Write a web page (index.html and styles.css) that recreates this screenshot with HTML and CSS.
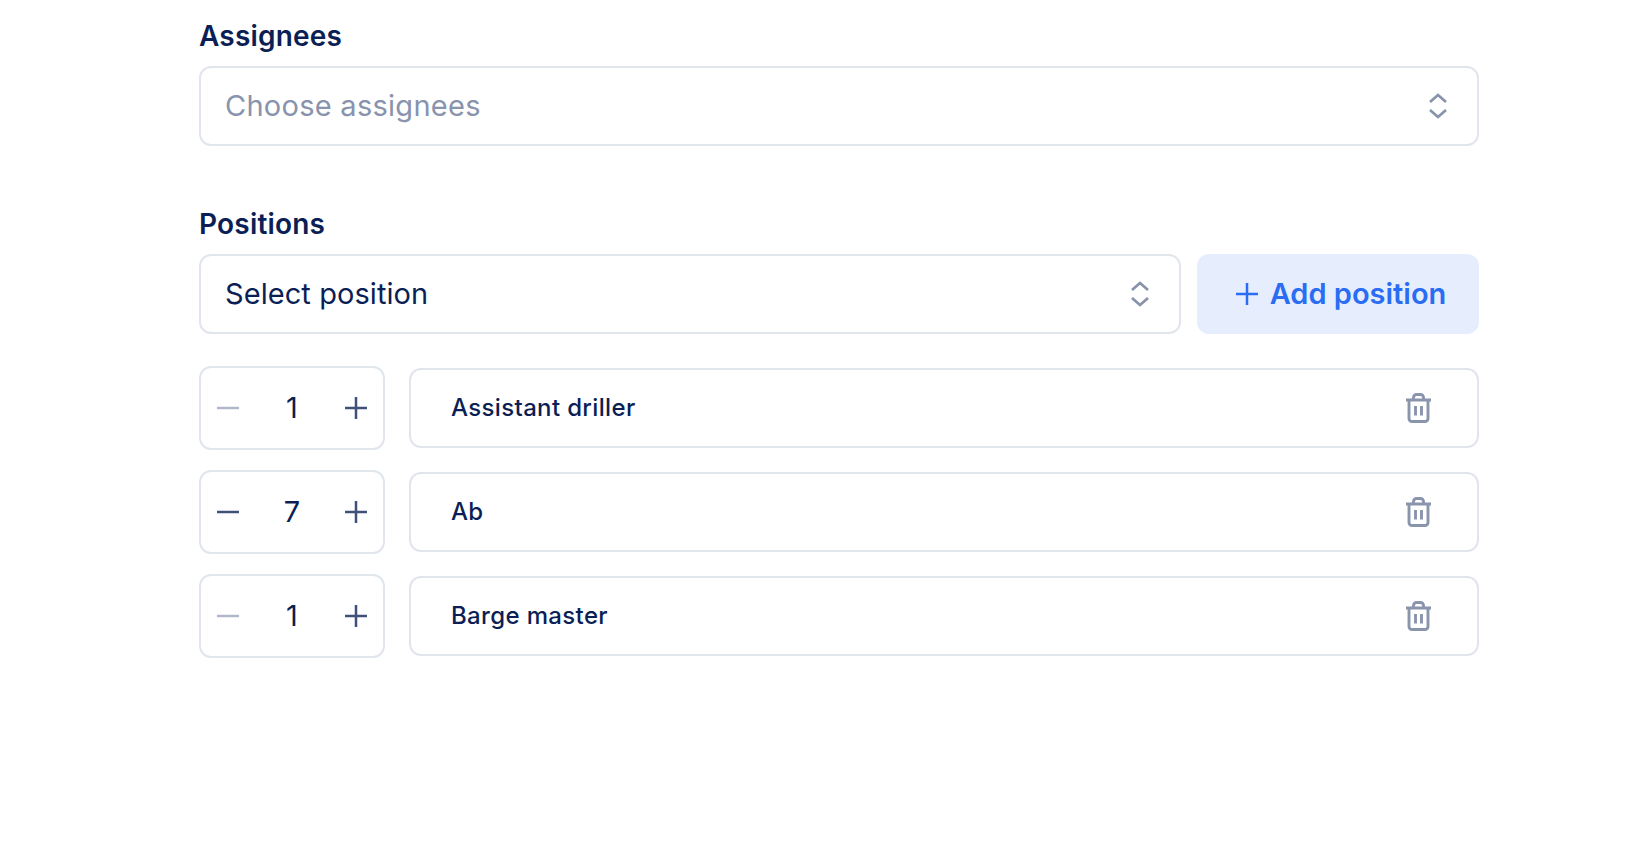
FILE: index.html
```html
<!DOCTYPE html>
<html lang="en">
<head>
<meta charset="utf-8">
<title>Positions</title>
<link rel="stylesheet" href="styles.css">
</head>
<body>
<main class="form">
  <section class="field">
    <label class="label">Assignees</label>
    <div class="select">
      <span class="placeholder">Choose assignees</span>
      <svg class="chev" viewBox="0 0 20 26"><path d="M2 9l8-7 8 7M2 17l8 7 8-7"/></svg>
    </div>
  </section>
  <section class="field">
    <label class="label">Positions</label>
    <div class="picker">
      <div class="select">
        <span class="value">Select position</span>
        <svg class="chev" viewBox="0 0 20 26"><path d="M2 9l8-7 8 7M2 17l8 7 8-7"/></svg>
      </div>
      <button class="add">
        <svg class="add-ic" viewBox="0 0 22 22"><path d="M11 0v22M0 11h22"/></svg>
        <span class="add-text">Add position</span>
      </button>
    </div>
    <div class="rows">
      <div class="row">
        <div class="stepper">
          <svg class="step off" viewBox="0 0 22 22"><path d="M0 11h22"/></svg>
          <span class="num">1</span>
          <svg class="step" viewBox="0 0 22 22"><path d="M11 0v22M0 11h22"/></svg>
        </div>
        <div class="item">
          <span class="name">Assistant driller</span>
          <svg class="trash" viewBox="0 0 27 30"><path d="M1 7h25M8.500 7V4.500a3 3 0 0 1 3-3h4a3 3 0 0 1 3 3V7M4 7v18.500a3 3 0 0 0 3 3h13a3 3 0 0 0 3-3V7M10.500 13v9.500M16.500 13v9.500"/></svg>
        </div>
      </div>
      <div class="row">
        <div class="stepper">
          <svg class="step" viewBox="0 0 22 22"><path d="M0 11h22"/></svg>
          <span class="num">7</span>
          <svg class="step" viewBox="0 0 22 22"><path d="M11 0v22M0 11h22"/></svg>
        </div>
        <div class="item">
          <span class="name">Ab</span>
          <svg class="trash" viewBox="0 0 27 30"><path d="M1 7h25M8.500 7V4.500a3 3 0 0 1 3-3h4a3 3 0 0 1 3 3V7M4 7v18.500a3 3 0 0 0 3 3h13a3 3 0 0 0 3-3V7M10.500 13v9.500M16.500 13v9.500"/></svg>
        </div>
      </div>
      <div class="row">
        <div class="stepper">
          <svg class="step off" viewBox="0 0 22 22"><path d="M0 11h22"/></svg>
          <span class="num">1</span>
          <svg class="step" viewBox="0 0 22 22"><path d="M11 0v22M0 11h22"/></svg>
        </div>
        <div class="item">
          <span class="name">Barge master</span>
          <svg class="trash" viewBox="0 0 27 30"><path d="M1 7h25M8.500 7V4.500a3 3 0 0 1 3-3h4a3 3 0 0 1 3 3V7M4 7v18.500a3 3 0 0 0 3 3h13a3 3 0 0 0 3-3V7M10.500 13v9.500M16.500 13v9.500"/></svg>
        </div>
      </div>
    </div>
  </section>
</main>
</body>
</html>
```
FILE: styles.css
```css
* { box-sizing: border-box; }
html, body { margin: 0; background: #fff; height: 100%; overflow: hidden; }
body { font-family: "Inter", "Liberation Sans", sans-serif; color: #0b1f56; }
.form { width: 1280px; margin-left: 199px; padding-top: 16px; display: flex; flex-direction: column; gap: 58px; }
.field { display: flex; flex-direction: column; gap: 10px; }
.label { font-size: 28px; line-height: 40px; font-weight: 600; letter-spacing: 0.2px; color: #0b1f56; }
.select { flex: none; height: 80px; border: 2px solid #e1e5ec; border-radius: 12px; display: flex; align-items: center; justify-content: space-between; padding: 0 29px 0 24px; background: #fff; }
.placeholder { font-size: 29px; letter-spacing: 0.27px; color: #8893ad; padding-bottom: 2px; }
.value { font-size: 29px; letter-spacing: 0.07px; color: #0b1f56; padding-bottom: 2px; }
.chev { width: 20px; height: 26px; fill: none; stroke: #8792ab; stroke-width: 2.700; }
.picker { display: flex; gap: 16px; }
.picker .select { flex: 1; }
.add { width: 282px; height: 80px; border: 0; border-radius: 12px; background: #e6edfd; color: #2a6df4; display: flex; align-items: center; justify-content: center; gap: 12px; font: 600 29px "Inter", "Liberation Sans", sans-serif; padding: 0 0 0 6px; }
.add-text { padding-bottom: 2px; }
.add-ic { width: 22px; height: 22px; fill: none; stroke: #2a6df4; stroke-width: 2.500; }
.rows { margin-top: 22px; display: flex; flex-direction: column; gap: 20px; }
.row { display: flex; align-items: center; gap: 24px; }
.stepper { width: 186px; height: 84px; border: 2px solid #e1e5ec; border-radius: 12px; display: flex; align-items: center; justify-content: space-between; padding: 0 16px; }
.step { width: 22px; height: 22px; fill: none; stroke: #3f4f78; stroke-width: 2.500; }
.step.off { stroke: #b0b8ca; }
.num { font-size: 29px; color: #0b1f56; padding-bottom: 2px; }
.item { flex: 1; height: 80px; border: 2px solid #e1e5ec; border-radius: 12px; display: flex; align-items: center; justify-content: space-between; padding: 0 45px 0 40px; }
.name { font-size: 24px; font-weight: 500; letter-spacing: 0.35px; color: #0b1f56; padding-bottom: 2px; }
.trash { width: 27px; height: 30px; fill: none; stroke: #8a94ad; stroke-width: 2.900; }
```
